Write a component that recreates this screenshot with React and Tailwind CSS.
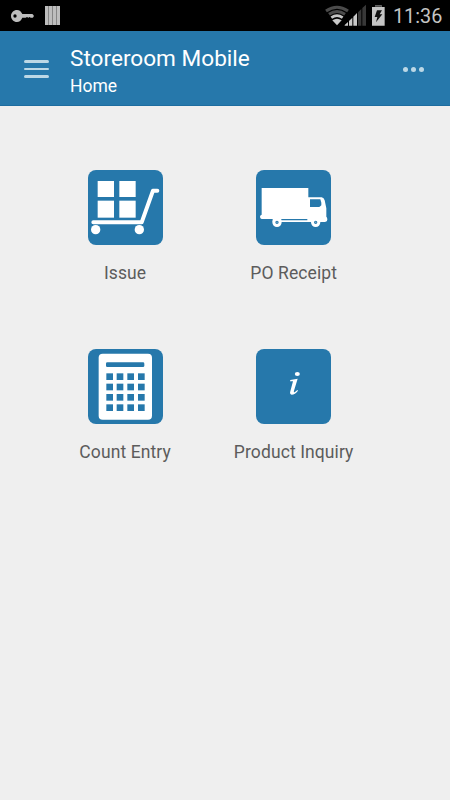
const tiles = [
  { label: 'Issue', icon: <IssueIcon /> },
  { label: 'PO Receipt', icon: <TruckIcon /> },
  { label: 'Count Entry', icon: <CalculatorIcon /> },
  { label: 'Product Inquiry', icon: <InfoIcon /> },
];

function IssueIcon() {
  return (
    <svg viewBox="23 24 225 225" className="size-full" fill="#fff">
      <rect x="52" y="57" width="49" height="48" />
      <rect x="117" y="57" width="49" height="48" />
      <rect x="52" y="116" width="49" height="51" />
      <rect x="117" y="116" width="49" height="51" />
      <path d="M39 181H184L218 86H231" fill="none" stroke="#fff" strokeWidth="12" strokeLinecap="round" strokeLinejoin="round" />
      <circle cx="46" cy="203" r="14" />
      <circle cx="177" cy="203" r="14" />
    </svg>
  );
}

function TruckIcon() {
  return (
    <svg viewBox="24 24 225 225" className="size-full" fill="#fff">
      <path d="M41 78H181V106H221Q228 107 230 115L235 139V164Q238 165 238 173Q238 179 231 180H74V171H41Q36 169 36 164Q36 159 41 158Z" />
      <path d="M186 112H217L220 122V130L214 135H186Z" fill="#2678ab" />
      <path d="M100 173H178" stroke="#2678ab" strokeWidth="4" />
      <circle cx="87" cy="181" r="9.5" fill="#2678ab" stroke="#fff" strokeWidth="9" />
      <circle cx="203" cy="181" r="9.5" fill="#2678ab" stroke="#fff" strokeWidth="9" />
      <circle cx="87" cy="181" r="2.5" fill="#75a9c9" />
      <circle cx="203" cy="181" r="2.5" fill="#75a9c9" />
    </svg>
  );
}

function CalculatorIcon() {
  const columns = [78, 109, 141, 173];
  const rows = [96, 127, 158, 189];
  return (
    <svg viewBox="23 23 225 225" className="size-full" fill="#2678ab">
      <rect x="55" y="37" width="160" height="198" rx="12" fill="#fff" />
      <rect x="77" y="63" width="115" height="14" rx="4" />
      {rows.map((y) => columns.map((x) => <rect key={`${x}-${y}`} x={x} y={y} width="20" height="20" />))}
    </svg>
  );
}

function InfoIcon() {
  return (
    <svg viewBox="24 23 225 225" className="size-full" fill="#fff">
      <ellipse cx="148" cy="98" rx="7.5" ry="6" />
      <path d="M127 116L149 112L138 148Q136 155 141 152L148 146L150 148Q141 160 131 160Q124 159 127 150L135 120H126Z" />
    </svg>
  );
}

function StatusBar() {
  return (
    <div className="flex h-[31px] items-center justify-between bg-black">
      <svg width="80" height="31" viewBox="0 0 240 93" fill="#bdbdbd">
        <path fillRule="evenodd" d="M51 30C58 30 64 35 67 42H97L101 46V50L98 53H92L89 51L85 53L81 51L77 53H67C64 61 58 66 51 66C41 66 33 58 33 48S41 30 51 30ZM45 43A5 5 0 1 0 45 53A5 5 0 1 0 45 43Z" />
        <rect x="135" y="18" width="45" height="57" fill="#858585" />
        <path d="M135 18h9v57h-9zM147 18h9v57h-9zM159 18h9v57h-9zM171 18h9v57h-9z" />
      </svg>
      <div className="flex items-center">
        <svg width="80" height="31" viewBox="0 0 240 93">
          <path d="M48 33Q81 10 114 33M57 43Q81 26 105 43" fill="none" stroke="#4b4b4b" strokeWidth="9" />
          <path d="M64 53Q81 41 98 53" fill="none" stroke="#c4c4c4" strokeWidth="8" />
          <path d="M81 76L67 61Q81 51 95 61Z" fill="#c9c9c9" />
          <path d="M104 77V75L114 66V77ZM117 77V63L127 53V77ZM130 77V50L141 39V77Z" fill="#c9c9c9" />
          <path d="M144 77V37L154 27V77ZM157 77V24L168 14V77Z" fill="#383838" />
          <path d="M195 16H215V21H224V77H186V21H195Z" fill="#c4c4c4" />
          <path d="M195 16H215V21H195Z" fill="#4a4a4a" />
          <path d="M201 31H216L209 43H217L198 67L202 51H194Z" fill="#111" />
        </svg>
        <span className="w-[60px] pl-[3px] pt-[2px] text-[19.8px] leading-[29px] text-[#c4c4c4]">11:36</span>
      </div>
    </div>
  );
}

function Header() {
  return (
    <header className="flex h-[75px] items-center border-b border-[#1d6da0] bg-[#2678ab] text-white">
      <div className="ml-6 mt-[2px] flex w-[25px] flex-col gap-[5.3px]">
        <span className="h-[2.4px] rounded-full bg-[#bcd8e6]" />
        <span className="h-[2.4px] rounded-full bg-[#bcd8e6]" />
        <span className="h-[2.4px] rounded-full bg-[#bcd8e6]" />
      </div>
      <div className="ml-[21px] flex-1 whitespace-nowrap pt-[10px]">
        <h1 className="text-[22.6px] leading-[27px]">Storeroom Mobile</h1>
        <p className="text-[17.5px] leading-[29px]">Home</p>
      </div>
      <div className="mr-[26px] mt-[2px] flex gap-[3px]">
        <span className="size-[5px] rounded-full bg-[#bcd8e6]" />
        <span className="size-[5px] rounded-full bg-[#bcd8e6]" />
        <span className="size-[5px] rounded-full bg-[#bcd8e6]" />
      </div>
    </header>
  );
}

export default function App() {
  return (
    <div className="h-[800px] w-[450px] overflow-hidden bg-[#efefef] font-['Roboto',sans-serif]">
      <StatusBar />
      <Header />
      <main className="ml-[40.8px] grid w-[337.2px] grid-cols-2 gap-y-[76.7px] pt-16">
        {tiles.map((tile) => (
          <div key={tile.label} className="flex h-[102px] flex-col items-center">
            <div className="size-[75px] shrink-0 overflow-hidden rounded-[8px] bg-[#2678ab]">{tile.icon}</div>
            <span className="mt-[17px] whitespace-nowrap text-[17.5px] leading-[22px] tracking-[0.1px] text-[#5c5c5c]">{tile.label}</span>
          </div>
        ))}
      </main>
    </div>
  );
}
